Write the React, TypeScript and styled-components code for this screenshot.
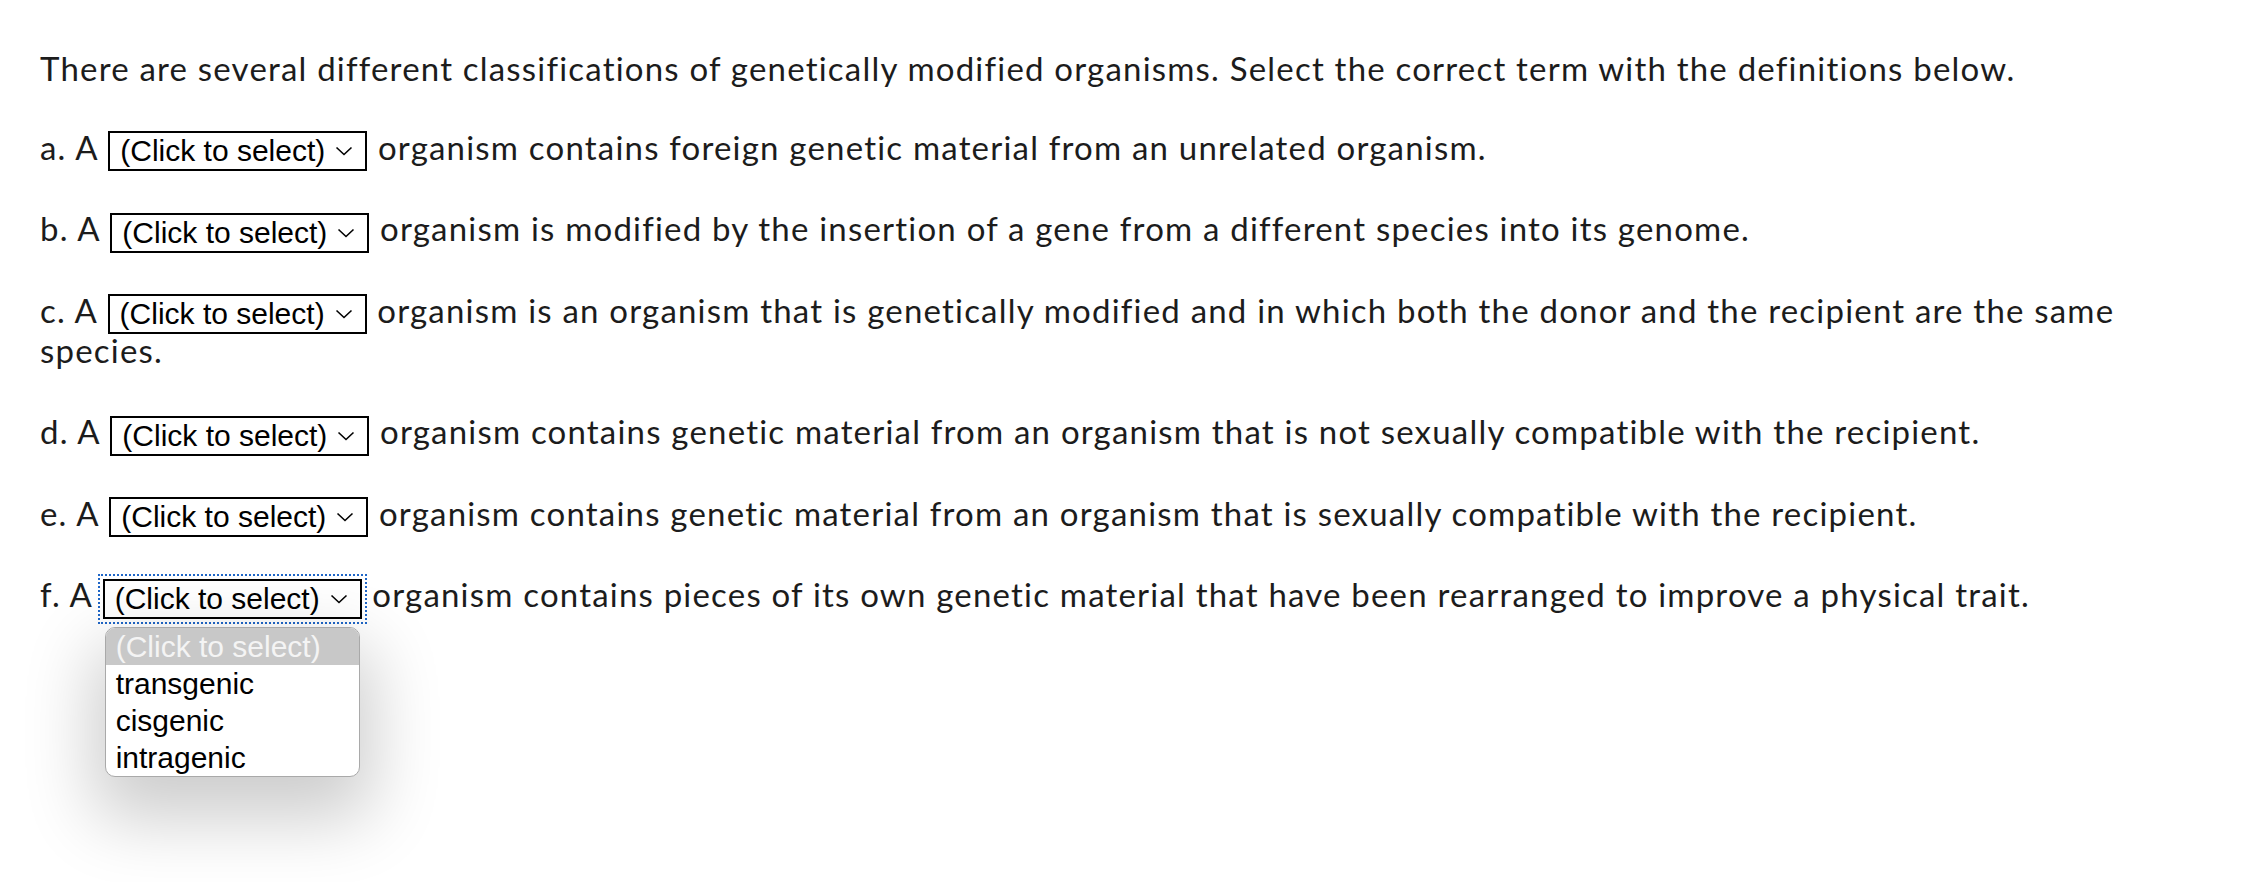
import styled, { createGlobalStyle } from "styled-components";

const GlobalStyle = createGlobalStyle`
  body {
    margin: 0;
    background: #ffffff;
  }
`;

const ITEMS = [
  { label: "a.", text: "organism contains foreign genetic material from an unrelated organism." },
  { label: "b.", text: "organism is modified by the insertion of a gene from a different species into its genome." },
  {
    label: "c.",
    text: "organism is an organism that is genetically modified and in which both the donor and the recipient are the same species.",
  },
  {
    label: "d.",
    text: "organism contains genetic material from an organism that is not sexually compatible with the recipient.",
  },
  {
    label: "e.",
    text: "organism contains genetic material from an organism that is sexually compatible with the recipient.",
  },
  {
    label: "f.",
    text: "organism contains pieces of its own genetic material that have been rearranged to improve a physical trait.",
    open: true,
  },
];

const OPTIONS = ["transgenic", "cisgenic", "intragenic"];

const Chevron = () => (
  <svg width="18" height="10" viewBox="0 0 18 10" fill="none">
    <polyline points="1.5,1.5 9,8.5 16.5,1.5" stroke="#000" strokeWidth="1.6" />
  </svg>
);

const App = () => {
  return (
    <>
      <GlobalStyle />
      <Page>
        <Intro>
          There are several different classifications of genetically modified organisms. Select the correct term
          with the definitions below.
        </Intro>
        {ITEMS.map((item) => (
          <Para key={item.label}>
            {item.label} A{" "}
            <PickerWrap>
              <Picker $focused={!!item.open}>
                <span>(Click to select)</span>
                <Chevron />
              </Picker>
              {item.open && (
                <Menu>
                  <MenuHead>(Click to select)</MenuHead>
                  {OPTIONS.map((o) => (
                    <MenuItem key={o}>{o}</MenuItem>
                  ))}
                </Menu>
              )}
            </PickerWrap>{" "}
            {item.text}
          </Para>
        ))}
      </Page>
    </>
  );
};

export default App;

const Page = styled.div`
  box-sizing: border-box;
  min-height: 100vh;
  padding: 48px 40px;
  font-family: Lato, "Liberation Sans", sans-serif;
  font-size: 33px;
  letter-spacing: 1.2px;
  line-height: 40px;
  color: #1c1c1c;
`;

const Intro = styled.p`
  margin: 0 0 38.5px;
`;

const Para = styled.p`
  margin: 0 0 41.5px;
`;

const PickerWrap = styled.span`
  position: relative;
  display: inline-flex;
  vertical-align: middle;
  margin: -6px 1px -6px 1px;
  letter-spacing: 0;
`;

const Picker = styled.span<{ $focused: boolean }>`
  box-sizing: border-box;
  display: inline-flex;
  align-items: center;
  justify-content: space-between;
  width: 259px;
  height: 40px;
  padding: 0 12px 0 10px;
  border: 2px solid #000;
  background: #fff;
  font-family: "Liberation Sans", Arial, sans-serif;
  font-size: 30px;
  line-height: 1;
  color: #000;
  outline: ${(p) => (p.$focused ? "2px dotted #1f66c7" : "none")};
  outline-offset: 3px;
`;

const Menu = styled.div`
  position: absolute;
  top: 48px;
  left: 2px;
  width: 255px;
  box-sizing: border-box;
  background: #fff;
  border: 1px solid #a9a9a9;
  border-radius: 10px;
  overflow: hidden;
  box-shadow: 0 30px 70px 12px rgba(0, 0, 0, 0.2);
  font-family: "Liberation Sans", Arial, sans-serif;
  font-size: 30px;
  line-height: 37px;
  color: #000;
  z-index: 2;
`;

const MenuHead = styled.div`
  height: 37px;
  padding: 0 10px;
  background: #c8c8c8;
  color: #f4f4f4;
`;

const MenuItem = styled.div`
  height: 37px;
  padding: 0 10px;
`;
